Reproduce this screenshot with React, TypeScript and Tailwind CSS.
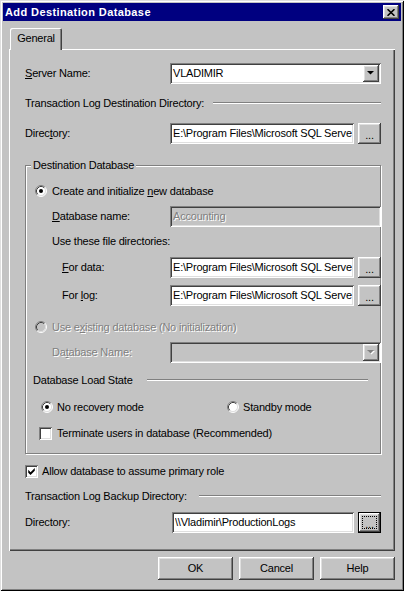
import React from 'react';

const SUNKEN =
  'shadow-[inset_1px_1px_0_#808080,inset_-1px_-1px_0_#ffffff,inset_2px_2px_0_#404040,inset_-2px_-2px_0_#dfdfdf]';
const RAISED =
  'shadow-[inset_-1px_-1px_0_#404040,inset_1px_1px_0_#ffffff,inset_-2px_-2px_0_#808080,inset_2px_2px_0_#dfdfdf]';
const DIS = 'text-[#808080] [text-shadow:1px_1px_0_#ffffff]';

function Radio({ checked = false, disabled = false }: { checked?: boolean; disabled?: boolean }) {
  return (
    <svg width="12" height="12" viewBox="0 0 12 12" className="shrink-0">
      <circle cx="6" cy="6" r="5" fill={disabled ? '#c3c3c3' : '#ffffff'} />
      <path d="M2.11 9.89 A5.5 5.5 0 0 1 9.89 2.11" fill="none" stroke="#808080" />
      <path d="M9.89 2.11 A5.5 5.5 0 0 1 2.11 9.89" fill="none" stroke="#ffffff" />
      <path d="M2.82 9.18 A4.5 4.5 0 0 1 9.18 2.82" fill="none" stroke="#404040" />
      <path d="M9.18 2.82 A4.5 4.5 0 0 1 2.82 9.18" fill="none" stroke="#dfdfdf" />
      {checked && <circle cx="6" cy="6" r="2" fill="#000000" />}
    </svg>
  );
}

function Check({ checked = false }: { checked?: boolean }) {
  return (
    <div className={`w-[13px] h-[13px] bg-white ${SUNKEN} shrink-0 flex items-center justify-center`}>
      {checked && (
        <svg width="7" height="7" viewBox="0 0 7 7.5">
          <path d="M0 2 L2.5 4.5 L7 0 L7 3 L2.5 7.5 L0 5 Z" fill="#000000" />
        </svg>
      )}
    </div>
  );
}

function Arrow({ disabled = false }: { disabled?: boolean }) {
  return (
    <svg width="8" height="5" viewBox="0 0 8 5">
      {disabled && <polygon points="1,1 8,1 4.5,4.5" fill="#ffffff" />}
      <polygon points="0,0 7,0 3.5,3.5" fill={disabled ? '#808080' : '#000000'} />
    </svg>
  );
}

function Combo({ text, disabled = false }: { text: string; disabled?: boolean }) {
  return (
    <div className={`w-[211px] h-[21px] ${disabled ? 'bg-[#c3c3c3]' : 'bg-white'} ${SUNKEN} flex p-[2px] shrink-0`}>
      <div className="flex-1 flex items-center pl-[1px] overflow-hidden whitespace-nowrap">{text}</div>
      <div className={`w-[16px] h-full bg-[#c3c3c3] ${RAISED} flex items-center justify-center`}>
        <Arrow disabled={disabled} />
      </div>
    </div>
  );
}

function Field({ text, wide = false, disabled = false }: { text: string; wide?: boolean; disabled?: boolean }) {
  return (
    <div
      className={`${wide ? 'w-[211px]' : 'w-[184px]'} h-[21px] ${disabled ? 'bg-[#c3c3c3]' : 'bg-white'} ${SUNKEN} flex items-center pl-[3px] pr-[2px] shrink-0`}
    >
      <div className={`flex-1 min-w-0 overflow-hidden whitespace-nowrap ${disabled ? DIS : ''}`}>{text}</div>
    </div>
  );
}

function Browse({ focused = false }: { focused?: boolean }) {
  if (focused) {
    return (
      <div className="w-[23px] h-[21px] border border-black bg-[#c3c3c3] shrink-0">
        <div className={`w-full h-full ${RAISED} p-[3px]`}>
          <div className="w-full h-full border border-dotted border-black flex items-center justify-center leading-none pt-[3px]">
            ...
          </div>
        </div>
      </div>
    );
  }
  return (
    <div className={`w-[23px] h-[21px] bg-[#c3c3c3] ${RAISED} flex items-center justify-center shrink-0 leading-none pt-[3px]`}>
      ...
    </div>
  );
}

function PathRow({ label, value }: { label: React.ReactNode; value: string }) {
  return (
    <div className="h-[21px] flex items-center justify-between">
      {label}
      <div className="flex gap-[4px]">
        <Field text={value} />
        <Browse />
      </div>
    </div>
  );
}

function Etched({ w }: { w: string }) {
  return <div className={`${w} h-[2px] border-t border-t-[#808080] border-b border-b-white ml-auto shrink-0`} />;
}

function Btn({ children }: { children: React.ReactNode }) {
  return (
    <div className={`w-[75px] h-[23px] bg-[#c3c3c3] ${RAISED} flex items-center justify-center`}>{children}</div>
  );
}

const PATH = 'E:\\Program Files\\Microsoft SQL Serve';

export default function App() {
  return (
    <div
      className="w-[404px] h-[591px] bg-[#c3c3c3] font-['Liberation_Sans',Arial,sans-serif] text-[11px] tracking-[-0.2px] text-black p-[3px] flex flex-col shadow-[inset_1px_1px_0_#dfdfdf,inset_-1px_-1px_0_#000000,inset_2px_2px_0_#ffffff,inset_-2px_-2px_0_#808080] select-none"
    >
      {/* Title bar */}
      <div className="h-[18px] bg-[#000080] flex items-center pl-[2px] pr-[2px]">
        <span className="text-white font-bold tracking-[0.4px] text-[11px]">Add Destination Database</span>
        <div className={`ml-auto w-[16px] h-[14px] bg-[#c3c3c3] ${RAISED} flex items-center justify-center`}>
          <svg width="8" height="7" viewBox="0 0 8 7">
            <path d="M0.5 0.2 L7.5 6.8 M7.5 0.2 L0.5 6.8" stroke="#000000" strokeWidth="1.6" fill="none" />
          </svg>
        </div>
      </div>

      {/* Body */}
      <div className="flex flex-col pl-[6px]">
        {/* Tabs */}
        <div className="mt-[7px] flex">
          <div className="ml-[1px] w-[52px] h-[22px] -mb-px relative z-10 bg-[#c3c3c3] rounded-t-[2px] shadow-[inset_1px_1px_0_#ffffff,inset_-1px_0_0_#404040,inset_-2px_0_0_#808080] flex items-center justify-center pb-[1px]">
            General
          </div>
        </div>

        {/* Panel */}
        <div className="w-[386px] h-[502px] shadow-[inset_1px_1px_0_#ffffff,inset_-1px_-1px_0_#404040,inset_-2px_-2px_0_#808080] flex flex-col pl-[16px] pr-[14px] pt-[14px]">
          <div className="h-[21px] flex items-center justify-between">
            <span>
              <span className="underline">S</span>erver Name:
            </span>
            <Combo text="VLADIMIR" />
          </div>

          <div className="mt-[11px] h-[16px] flex items-center">
            <span>Transaction Log Destination Directory:</span>
            <Etched w="w-[168px]" />
          </div>

          <div className="mt-[12px]">
            <PathRow
              label={
                <span>
                  Direc<span className="underline">t</span>ory:
                </span>
              }
              value={PATH}
            />
          </div>

          {/* Group box */}
          <div className="mt-[21px] h-[289px] border border-[#808080] shadow-[inset_1px_1px_0_#ffffff,1px_1px_0_#ffffff] flex flex-col">
            <div className="-mt-[9px] h-[16px] flex items-center">
              <span className="ml-[5px] px-[2px] bg-[#c3c3c3]">Destination Database</span>
            </div>

            <div className="mt-[10px] h-[16px] flex items-center pl-[9px]">
              <Radio checked />
              <span className="ml-[5px]">
                Create and initialize <span className="underline">n</span>ew database
              </span>
            </div>

            <div className="mt-[7px] h-[21px] flex items-center justify-between -mr-px">
              <span className="ml-[26px]">
                <span className="underline">D</span>atabase name:
              </span>
              <Field text="Accounting" wide disabled />
            </div>

            <div className="mt-[6px] h-[16px] flex items-center">
              <span className="ml-[26px]">Use these file directories:</span>
            </div>

            <div className="mt-[8px] -mr-px">
              <PathRow
                label={
                  <span className="ml-[36px]">
                    <span className="underline">F</span>or data:
                  </span>
                }
                value={PATH}
              />
            </div>
            <div className="mt-[7px] -mr-px">
              <PathRow
                label={
                  <span className="ml-[36px]">
                    For <span className="underline">l</span>og:
                  </span>
                }
                value={PATH}
              />
            </div>

            <div className="mt-[13px] h-[16px] flex items-center pl-[9px]">
              <Radio disabled />
              <span className={`ml-[5px] ${DIS}`}>
                Use e<span className="underline">x</span>isting database (No initialization)
              </span>
            </div>

            <div className="mt-[7px] h-[21px] flex items-center justify-between -mr-px">
              <span className={`ml-[26px] ${DIS}`}>
                Da<span className="underline">t</span>abase Name:
              </span>
              <Combo text="" disabled />
            </div>

            <div className="mt-[9px] h-[16px] flex items-center pl-[7px] pr-[12px]">
              <span>Database Load State</span>
              <Etched w="w-[221px]" />
            </div>

            <div className="mt-[11px] h-[16px] flex items-center pl-[15px]">
              <div className="w-[186px] flex items-center">
                <Radio checked />
                <span className="ml-[4px]">No recovery mode</span>
              </div>
              <Radio />
              <span className="ml-[4px]">Standby mode</span>
            </div>

            <div className="mt-[10px] h-[16px] flex items-center pl-[13px]">
              <Check />
              <span className="ml-[5px]">Terminate users in database (Recommended)</span>
            </div>
          </div>

          <div className="mt-[9px] h-[16px] flex items-center">
            <Check checked />
            <span className="ml-[4px]">Allow database to assume primary role</span>
          </div>

          <div className="mt-[9px] h-[16px] flex items-center">
            <span>Transaction Log Backup Directory:</span>
            <Etched w="w-[182px]" />
          </div>

          <div className="mt-[8px] h-[21px] flex items-center justify-between">
            <span>Directory:</span>
            <div className="flex gap-[4px]">
              <div className={`w-[182px] h-[21px] bg-white ${SUNKEN} flex items-center pl-[3px] pr-[2px]`}>
                <div className="flex-1 min-w-0 overflow-hidden whitespace-nowrap">\\Vladimir\ProductionLogs</div>
              </div>
              <Browse focused />
            </div>
          </div>
        </div>

        {/* Buttons */}
        <div className="mt-[6px] w-[386px] flex justify-end gap-[6px]">
          <Btn>OK</Btn>
          <Btn>Cancel</Btn>
          <Btn>Help</Btn>
        </div>
      </div>
    </div>
  );
}
